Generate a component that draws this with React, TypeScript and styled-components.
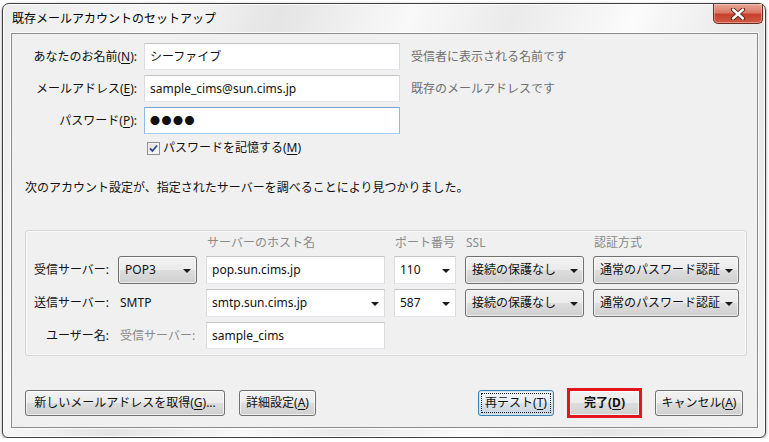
import React from 'react';
import styled, { createGlobalStyle, css } from 'styled-components';

const GlobalStyle = createGlobalStyle`
  html, body {
    margin: 0;
    padding: 0;
    background: #ffffff;
  }
  body {
    font-family: "Noto Sans", "Noto Sans CJK JP", sans-serif;
    font-size: 12px;
    color: #111;
  }
`;

const Window = styled.div`
  box-sizing: border-box;
  width: 764px;
  height: 435px;
  margin: 3px 0 0 2px;
  border: 1px solid #3f3f3f;
  border-radius: 7px 7px 6px 6px;
  background:
    linear-gradient(112deg, #ececec 0%, #f7f7f7 18%, #e4e4e4 30%, #f9f9f9 44%, #eaeaea 55%, #fbfbfb 68%, #e5e5e5 82%, #f3f3f3 100%);
  box-shadow: inset 0 0 0 1px rgba(255, 255, 255, 0.85), 0 1px 3px rgba(0, 0, 0, 0.45);
  display: flex;
  flex-direction: column;
`;

const TitleBar = styled.div`
  height: 29px;
  display: flex;
  align-items: flex-start;
  justify-content: space-between;
  padding-left: 9px;
`;

const Title = styled.div`
  margin-top: 7px;
  font-size: 12px;
  line-height: 16px;
  color: #000;
`;

const CloseButton = styled.div`
  box-sizing: border-box;
  width: 50px;
  height: 20px;
  margin-right: 2px;
  border: 1px solid #6a2a22;
  border-top: none;
  border-radius: 0 0 5px 5px;
  background: linear-gradient(#e9a795 0%, #d97a66 45%, #c8402f 55%, #cf5a40 100%);
  box-shadow: inset 0 0 0 1px rgba(255, 220, 210, 0.45);
  display: flex;
  align-items: center;
  justify-content: center;
`;

const Client = styled.div`
  flex: 1;
  margin: 0 7px 9px 8px;
  border: 1px solid #8c8c8c;
  box-shadow: 0 0 0 1px rgba(255, 255, 255, 0.75);
  background: #f0f0f0;
  padding: 9px 11px 9px 13px;
  display: flex;
  flex-direction: column;
`;

const FormGrid = styled.div`
  display: grid;
  grid-template-columns: 112px 256px auto;
  grid-auto-rows: 27px;
  column-gap: 7px;
  row-gap: 5px;
  align-items: center;
`;

const FieldLabel = styled.label`
  text-align: right;
  white-space: nowrap;
  line-height: 16px;
`;

const TextBox = styled.div<{ $focused?: boolean }>`
  box-sizing: border-box;
  height: 100%;
  background: #fff;
  border: 1px solid;
  border-color: #c2c4c8 #dadce0 #e2e5e9 #dadce0;
  padding: 0 5px;
  display: flex;
  align-items: center;
  line-height: 16px;
  white-space: nowrap;
  ${(p) =>
    p.$focused &&
    css`
      border-color: #6ea6dc #8bbbe8 #a9cdf0 #8bbbe8;
    `}
`;

const Dots = styled.span`
  font-family: "Noto Sans CJK JP", sans-serif;
  font-size: 10px;
  letter-spacing: 1.5px;
`;

const Hint = styled.div`
  margin-left: 4px;
  color: #6f6f6f;
  line-height: 16px;
  white-space: nowrap;
`;

const CheckRow = styled.label`
  display: flex;
  align-items: center;
  gap: 3px;
  height: 18px;
  margin: 5px 0 0 122px;
  line-height: 16px;
`;

const CheckBox = styled.span`
  box-sizing: border-box;
  width: 13px;
  height: 13px;
  border: 1px solid #8e8f8f;
  background: linear-gradient(135deg, #dcdcdc, #fbfbfb);
  box-shadow: inset 0 0 0 1px #f4f4f4;
  display: flex;
  align-items: center;
  justify-content: center;
`;

const Message = styled.p`
  margin: 22px 0 0 0;
  line-height: 18px;
`;

const GroupBox = styled.div`
  box-sizing: border-box;
  margin-top: 33px;
  width: 722px;
  border: 1px solid #d5d5d5;
  border-radius: 3px;
  box-shadow: inset 0 0 0 1px #fafafa;
  padding: 4px 7px 6px 5px;
`;

const ServerGrid = styled.div`
  display: grid;
  grid-template-columns: 78px 79px 179px 62px 119px 146px;
  grid-template-rows: 16px 28px 28px 27px;
  column-gap: 9px;
  row-gap: 5px;
  align-items: center;
  & > :nth-child(-n + 6) {
    align-self: start;
  }
`;

const ColHeader = styled.div`
  color: #8a8a8a;
  padding-left: 1px;
  line-height: 16px;
  white-space: nowrap;
`;

const RowLabel = styled.div`
  text-align: right;
  line-height: 16px;
  white-space: nowrap;
`;

const StaticText = styled.div<{ $muted?: boolean }>`
  padding-left: 2px;
  line-height: 16px;
  white-space: nowrap;
  color: ${(p) => (p.$muted ? '#8a8a8a' : '#111')};
`;

const DropButton = styled.div`
  box-sizing: border-box;
  height: 28px;
  border: 1px solid #707070;
  border-radius: 3px;
  background: linear-gradient(#f2f2f2 0%, #ebebeb 50%, #dddddd 51%, #cfcfcf 100%);
  box-shadow: inset 0 0 0 1px rgba(255, 255, 255, 0.6);
  padding: 0 5px 0 6px;
  display: flex;
  align-items: center;
  justify-content: space-between;
  line-height: 16px;
  white-space: nowrap;
`;

const ComboBox = styled(TextBox)`
  justify-content: space-between;
  padding-right: 5px;
`;

const Arrow = styled.span`
  width: 0;
  height: 0;
  border-left: 4px solid transparent;
  border-right: 4px solid transparent;
  border-top: 4px solid #1a1a1a;
  margin-top: 1px;
  flex: none;
`;

const ButtonRow = styled.div`
  margin-top: auto;
  display: flex;
  align-items: center;
  justify-content: space-between;
  padding-right: 3px;
`;

const ButtonGroup = styled.div<{ $gap: number }>`
  display: flex;
  align-items: center;
  gap: ${(p) => p.$gap}px;
`;

const PushButton = styled.button<{ $w: number; $focused?: boolean; $marked?: boolean }>`
  box-sizing: border-box;
  width: ${(p) => p.$w}px;
  height: 26px;
  font: inherit;
  color: #111;
  border: 1px solid #707070;
  border-radius: 3px;
  background: linear-gradient(#f2f2f2 0%, #ebebeb 50%, #dddddd 51%, #cfcfcf 100%);
  box-shadow: inset 0 0 0 1px rgba(255, 255, 255, 0.65);
  padding: 0;
  line-height: 16px;
  white-space: nowrap;
  ${(p) =>
    p.$focused &&
    css`
      border-color: #3c7fb1;
      background: linear-gradient(#f1f5f9 0%, #e7edf3 50%, #d8e1ea 51%, #ccd6e0 100%);
      box-shadow: inset 0 0 0 1px #cfe6f7;
      outline: 1px dotted #1f1f1f;
      outline-offset: -4px;
    `}
  ${(p) =>
    p.$marked &&
    css`
      height: 30px;
      border: 3px solid #e3161e;
      border-radius: 0;
      font-weight: bold;
    `}
`;

const Key = styled.u`
  text-decoration-thickness: 1px;
  text-underline-offset: 2px;
`;

const CloseGlyph = () => (
  <svg width="16" height="12" viewBox="0 0 16 12">
    <path d="M3 1.5 L13 10.5 M13 1.5 L3 10.5" stroke="#4a1a14" strokeWidth="4.2" strokeLinecap="round" />
    <path d="M3 1.5 L13 10.5 M13 1.5 L3 10.5" stroke="#ffffff" strokeWidth="2.4" strokeLinecap="round" />
  </svg>
);

const CheckMark = () => (
  <svg width="9" height="9" viewBox="0 0 9 9">
    <path d="M1 4.5 L3.5 7 L8 1.5" stroke="#2c4b86" strokeWidth="1.8" fill="none" />
  </svg>
);

export default function App() {
  return (
    <>
      <GlobalStyle />
      <Window>
        <TitleBar>
          <Title>既存メールアカウントのセットアップ</Title>
          <CloseButton>
            <CloseGlyph />
          </CloseButton>
        </TitleBar>
        <Client>
          <FormGrid>
            <FieldLabel>
              あなたのお名前(<Key>N</Key>):
            </FieldLabel>
            <TextBox>シーファイブ</TextBox>
            <Hint>受信者に表示される名前です</Hint>

            <FieldLabel>
              メールアドレス(<Key>E</Key>):
            </FieldLabel>
            <TextBox>sample_cims@sun.cims.jp</TextBox>
            <Hint>既存のメールアドレスです</Hint>

            <FieldLabel>
              パスワード(<Key>P</Key>):
            </FieldLabel>
            <TextBox $focused>
              <Dots>●●●●</Dots>
            </TextBox>
            <span />
          </FormGrid>

          <CheckRow>
            <CheckBox>
              <CheckMark />
            </CheckBox>
            <span>
              パスワードを記憶する(<Key>M</Key>)
            </span>
          </CheckRow>

          <Message>次のアカウント設定が、指定されたサーバーを調べることにより見つかりました。</Message>

          <GroupBox>
            <ServerGrid>
              <span />
              <span />
              <ColHeader>サーバーのホスト名</ColHeader>
              <ColHeader>ポート番号</ColHeader>
              <ColHeader>SSL</ColHeader>
              <ColHeader>認証方式</ColHeader>

              <RowLabel>受信サーバー:</RowLabel>
              <DropButton>
                POP3 <Arrow />
              </DropButton>
              <TextBox>pop.sun.cims.jp</TextBox>
              <ComboBox>
                110 <Arrow />
              </ComboBox>
              <DropButton>
                接続の保護なし <Arrow />
              </DropButton>
              <DropButton>
                通常のパスワード認証 <Arrow />
              </DropButton>

              <RowLabel>送信サーバー:</RowLabel>
              <StaticText>SMTP</StaticText>
              <ComboBox>
                smtp.sun.cims.jp <Arrow />
              </ComboBox>
              <ComboBox>
                587 <Arrow />
              </ComboBox>
              <DropButton>
                接続の保護なし <Arrow />
              </DropButton>
              <DropButton>
                通常のパスワード認証 <Arrow />
              </DropButton>

              <RowLabel>ユーザー名:</RowLabel>
              <StaticText $muted>受信サーバー:</StaticText>
              <TextBox>sample_cims</TextBox>
            </ServerGrid>
          </GroupBox>

          <ButtonRow>
            <ButtonGroup $gap={14}>
              <PushButton $w={200}>
                新しいメールアドレスを取得(<Key>G</Key>)...
              </PushButton>
              <PushButton $w={77}>
                詳細設定(<Key>A</Key>)
              </PushButton>
            </ButtonGroup>
            <ButtonGroup $gap={13}>
              <PushButton $w={76} $focused>
                再テスト(<Key>T</Key>)
              </PushButton>
              <PushButton $w={75} $marked>
                完了(<Key>D</Key>)
              </PushButton>
              <PushButton $w={88}>
                キャンセル(<Key>A</Key>)
              </PushButton>
            </ButtonGroup>
          </ButtonRow>
        </Client>
      </Window>
    </>
  );
}
